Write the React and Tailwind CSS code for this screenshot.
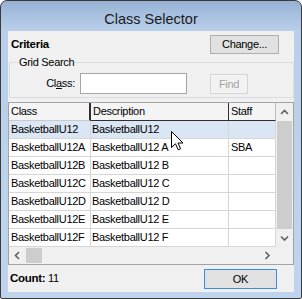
const ROWS = [
    ['BasketballU12', 'BasketballU12', ''],
    ['BasketballU12A', 'BasketballU12 A', 'SBA'],
    ['BasketballU12B', 'BasketballU12 B', ''],
    ['BasketballU12C', 'BasketballU12 C', ''],
    ['BasketballU12D', 'BasketballU12 D', ''],
    ['BasketballU12E', 'BasketballU12 E', ''],
    ['BasketballU12F', 'BasketballU12 F', ''],
];

function Chevron({ dir }) {
    const pts = {
        up: '1,5 4.5,1.5 8,5',
        down: '1,1.5 4.5,5 8,1.5',
        left: '5,1 1.5,4.5 5,8',
        right: '1.5,1 5,4.5 1.5,8',
    }[dir];
    const size = dir === 'up' || dir === 'down' ? { w: 9, h: 7 } : { w: 7, h: 9 };
    return (
        <svg width={size.w} height={size.h} viewBox={`0 0 ${size.w} ${size.h}`}>
            <polyline points={pts} fill="none" stroke="#606060" strokeWidth="1.6" />
        </svg>
    );
}

function Cursor() {
    return (
        <svg width="13" height="20" viewBox="0 0 13 20" className="absolute left-[171px] top-[131px]">
            <path d="M0.5 0.5 L0.5 16.5 L4.5 12.8 L7.2 18.8 L9.6 17.8 L7 12 L12 12 Z" fill="white" stroke="black" strokeWidth="1" strokeLinejoin="miter" />
        </svg>
    );
}

export default function App() {
    return (
        <div className="relative w-[302px] h-[299px] font-['Liberation_Sans',Arial,sans-serif] text-[11px] tracking-[-0.3px] text-black">
            <div className="flex flex-col w-full h-full border border-[#3a3a3a] rounded-t-[7px] rounded-b-[2px] bg-[linear-gradient(to_bottom,#97b2d4_0px,#a9c2e0_16px,#b9cfe9_30px,#bfd4ec_100%)] px-[7px] pb-[6px]">
                <div className="h-[30px] flex justify-center pt-[8px]">
                    <span className="text-[14.5px] leading-[20px] tracking-normal text-[#1b1b1b]">Class Selector</span>
                </div>

                <div className="flex flex-col flex-1 bg-[#f0f0f0] pt-[4px]">
                    <div className="flex items-center justify-between h-[19px] pl-[3px] pr-[15px]">
                        <span className="font-bold text-[11.5px]">Criteria</span>
                        <button className="w-[69px] h-[19px] border border-[#adadad] bg-[#e1e1e1] leading-none">Change...</button>
                    </div>

                    <fieldset className="mt-[2px] ml-[1px] border border-[#d8dde2] pb-[3px]">
                        <legend className="ml-[8px] px-[1px] leading-[12px]">Grid Search</legend>
                        <div className="flex items-start pt-[5px]">
                            <label className="w-[65px] text-right leading-[21px]">
                                Cl<span className="underline">a</span>ss:
                            </label>
                            <input className="ml-[5px] w-[107px] h-[21px] border border-[#a5a5a5] bg-white outline-none" />
                            <button disabled className="ml-[23px] mt-[1px] w-[38px] h-[20px] border border-[#d5d5d5] bg-[#f2f2f2] text-[#a3a3a3] leading-none">Find</button>
                        </div>
                    </fieldset>

                    <div className="mt-[4px] flex flex-col border border-[#a3a3a3] bg-white">
                        <div className="flex">
                            <div className="flex flex-col">
                                <div className="flex h-[18px] bg-[#f4f4f4]">
                                    <div className="w-[82px] pl-[2px] leading-[17px] border-r-2 border-r-[#2f2f2f] border-b border-b-[#c9c9c9]">Class</div>
                                    <div className="w-[138px] pl-[2px] leading-[17px] border-r border-r-[#2f2f2f] border-b border-b-[#2f2f2f]">Description</div>
                                    <div className="w-[47px] pl-[2px] leading-[17px] border-r border-r-[#bdbdbd] border-b border-b-[#2f2f2f]">Staff</div>
                                </div>
                                {ROWS.map((r, i) => (
                                    <div key={r[0]} className={`flex h-[18px] ${i === 0 ? 'bg-[#dae6f4]' : 'bg-white'}`}>
                                        <div className="w-[82px] pl-[2px] leading-[17px] border-r border-b border-[#d6d6d6] whitespace-nowrap overflow-hidden">{r[0]}</div>
                                        <div className="w-[138px] pl-[1px] leading-[17px] border-r border-b border-[#d6d6d6] whitespace-nowrap">{r[1]}</div>
                                        <div className="w-[47px] pl-[2px] leading-[17px] border-r border-b border-[#d6d6d6]">{r[2]}</div>
                                    </div>
                                ))}
                            </div>
                            <div className="flex flex-col w-[17px] bg-[#f0f0f0]">
                                <div className="h-[18px] flex items-center justify-center">
                                    <Chevron dir="up" />
                                </div>
                                <div className="flex-1 bg-[#cdcdcd] mx-[1px]" />
                                <div className="h-[18px] flex items-center justify-center">
                                    <Chevron dir="down" />
                                </div>
                            </div>
                        </div>
                        <div className="flex h-[17px]">
                            <div className="flex w-[267px] bg-[#f0f0f0]">
                                <div className="w-[17px] flex items-center justify-center">
                                    <Chevron dir="left" />
                                </div>
                                <div className="w-[16px] my-[1px] bg-[#cdcdcd]" />
                                <div className="flex-1" />
                                <div className="w-[17px] flex items-center justify-center">
                                    <Chevron dir="right" />
                                </div>
                            </div>
                            <div className="w-[17px] bg-[#f0f0f0]" />
                        </div>
                    </div>

                    <div className="mt-[4px] flex items-center justify-between pl-[2px] pr-[17px]">
                        <span>
                            <span className="font-bold text-[11.5px]">Count:</span> 11
                        </span>
                        <button className="w-[73px] h-[20px] border border-[#3590e3] bg-[#e1e1e1] leading-none">OK</button>
                    </div>
                </div>
            </div>
            <Cursor />
        </div>
    );
}
